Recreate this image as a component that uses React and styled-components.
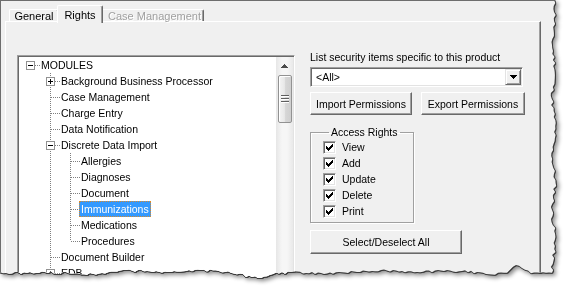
// IMPORT DEPENDENCIES
import React from "react";
import styled, { createGlobalStyle } from "styled-components";

const GlobalStyle = createGlobalStyle`
  html, body {
    margin: 0;
    padding: 0;
    background: #fff;
  }
  body {
    font-family: "Liberation Sans", Arial, sans-serif;
    font-size: 10.5px;
    color: #000;
  }
`;

// TORN PAPER EDGE (RIGHT + BOTTOM) AS A CLIP POLYGON
const W = 560;
const H = 282;
let seed = 11;
const rand = () => {
  seed = (seed * 9301 + 49297) % 233280;
  return seed / 233280;
};
const tornEdge = (() => {
  const pts = ["0px 0px"];
  for (let y = 0; y <= 270; y += 3) {
    const x = 553.5 + Math.sin(y / 9) * 1.4 + (rand() - 0.5) * 3.2;
    pts.push(`${x.toFixed(1)}px ${y}px`);
  }
  for (let x = 552; x >= 0; x -= 3) {
    const bump = -8 * Math.exp(-((x - 517) ** 2) / 60);
    const dip = 4 * Math.exp(-((x - 255) ** 2) / 200);
    const y =
      272 +
      Math.sin(x / 37) * 1.2 +
      Math.sin(x / 13 + 1) * 0.8 +
      bump +
      dip +
      (rand() - 0.5) * 2.4;
    pts.push(`${x}px ${y.toFixed(1)}px`);
  }
  return `polygon(${pts.join(", ")})`;
})();

// TREE DATA
const TREE = [
  {
    label: "MODULES",
    open: true,
    children: [
      { label: "Background Business Processor", closed: true },
      { label: "Case Management" },
      { label: "Charge Entry" },
      { label: "Data Notification" },
      {
        label: "Discrete Data Import",
        open: true,
        children: [
          { label: "Allergies" },
          { label: "Diagnoses" },
          { label: "Document" },
          { label: "Immunizations", selected: true },
          { label: "Medications" },
          { label: "Procedures" },
        ],
      },
      { label: "Document Builder" },
      { label: "EDB", closed: true },
      { label: "Encounter Forms" },
    ],
  },
];

// FLATTEN TREE INTO ROWS WITH THE GUIDE LINES EACH ROW NEEDS
const flatten = (nodes, guides = [], out = []) => {
  nodes.forEach((node, i) => {
    const last = i === nodes.length - 1;
    out.push({
      ...node,
      guides,
      first: guides.length === 0 && i === 0,
      last,
      expandable: !!node.children || !!node.closed,
    });
    if (node.open && node.children) {
      flatten(node.children, [...guides, !last], out);
    }
  });
  return out;
};

const ROWS = flatten(TREE);
const RIGHTS = ["View", "Add", "Update", "Delete", "Print"];

const Arrow = ({ up }) => (
  <svg
    width="7"
    height="4"
    viewBox="0 0 7 4"
    shapeRendering="crispEdges"
    style={up ? { transform: "rotate(180deg)" } : undefined}
  >
    <path
      d="M0 0h7v1h-1v1h-1v1h-1v1h-1v-1h-1v-1h-1v-1h-1z"
      fill={up ? "#4d4d4d" : "#000"}
    />
  </svg>
);

const Tick = () => (
  <svg width="7" height="7" viewBox="0 0 7 7" shapeRendering="crispEdges">
    <path
      d="M6 0h1v1h-1z M5 1h2v1h-2z M0 2h1v1h-1z M4 2h3v1h-3z M0 3h2v1h-2z M3 3h3v1h-3z M0 4h5v1h-5z M1 5h3v1h-3z M2 6h1v1h-1z"
      fill="#000"
    />
  </svg>
);

const Sign = ({ plus }) => (
  <svg width="7" height="7" viewBox="0 0 7 7" shapeRendering="crispEdges">
    <rect x="1" y="3" width="5" height="1" fill="#000" />
    {plus && <rect x="3" y="1" width="1" height="5" fill="#000" />}
  </svg>
);

const App = () => {
  return (
    <>
      <GlobalStyle />
      <Page>
        <Shadow>
          <Dialog>
            <TabStrip>
              <Tab $w={50}>General</Tab>
              <Tab $w={46} $active>
                Rights
              </Tab>
              <Tab $w={103} $pad={4} $disabled>
                Case Management
              </Tab>
            </TabStrip>
            <Panel>
              <TreeBox>
                <TreeList>
                  {ROWS.map((row) => (
                    <TreeRow key={row.label}>
                      {row.guides.map((on, i) => (
                        <Guide key={i} $on={on} />
                      ))}
                      <Gutter $up={!row.first} $down={!row.last}>
                        {row.expandable && (
                          <Expander>
                            <Sign plus={!row.open} />
                          </Expander>
                        )}
                      </Gutter>
                      <Label $selected={row.selected}>{row.label}</Label>
                    </TreeRow>
                  ))}
                </TreeList>
                <ScrollBar>
                  <ArrowButton>
                    <Arrow up />
                  </ArrowButton>
                  <Thumb>
                    <svg width="8" height="8" viewBox="0 0 8 8" shapeRendering="crispEdges">
                      <rect y="0" width="8" height="1" fill="#5f5f5f" />
                      <rect y="1" width="8" height="1" fill="#fff" />
                      <rect y="3" width="8" height="1" fill="#5f5f5f" />
                      <rect y="4" width="8" height="1" fill="#fff" />
                      <rect y="6" width="8" height="1" fill="#5f5f5f" />
                      <rect y="7" width="8" height="1" fill="#fff" />
                    </svg>
                  </Thumb>
                </ScrollBar>
              </TreeBox>

              <Side>
                <Caption>List security items specific to this product</Caption>
                <Combo>
                  <span>&lt;All&gt;</span>
                  <DropButton>
                    <Arrow />
                  </DropButton>
                </Combo>
                <ButtonRow>
                  <Button $w={102}>Import Permissions</Button>
                  <Button $w={104}>Export Permissions</Button>
                </ButtonRow>
                <GroupBox>
                  <legend>Access Rights</legend>
                  {RIGHTS.map((name) => (
                    <CheckRow key={name}>
                      <CheckBox>
                        <Tick />
                      </CheckBox>
                      {name}
                    </CheckRow>
                  ))}
                </GroupBox>
                <Button $w={152} $h={24} style={{ marginTop: 7 }}>
                  Select/Deselect All
                </Button>
              </Side>
            </Panel>
          </Dialog>
        </Shadow>
      </Page>
    </>
  );
};

const DOT_V = "repeating-linear-gradient(to bottom, #7f7f7f 0 1px, transparent 1px 2px)";
const DOT_H = "repeating-linear-gradient(to right, #7f7f7f 0 1px, transparent 1px 2px)";

const Page = styled.div`
  width: 566px;
  height: 286px;
  overflow: hidden;
  background: #fff;
`;

const Shadow = styled.div`
  width: ${W}px;
  height: ${H}px;
  filter: drop-shadow(1px 0 0 #3a3a3a) drop-shadow(0 1px 0 #3a3a3a)
    drop-shadow(2px 2px 2px rgba(0, 0, 0, 0.45));
`;

const Dialog = styled.div`
  box-sizing: border-box;
  width: 100%;
  height: 100%;
  overflow: hidden;
  clip-path: ${tornEdge};
  background: #f0f0f0;
  border-top: 1px solid #6d6d6d;
  border-left: 1px solid #6d6d6d;
  padding: 4px 0 0 4px;
`;

const TabStrip = styled.div`
  position: relative;
  z-index: 1;
  display: flex;
  align-items: flex-end;
  height: 16px;
  padding-left: 4px;
`;

const Tab = styled.div`
  box-sizing: border-box;
  position: relative;
  z-index: ${(p) => (p.$active ? 1 : 0)};
  width: ${(p) => p.$w}px;
  height: ${(p) => (p.$active ? 18 : 12)}px;
  margin: 0 ${(p) => (p.$active ? -2 : 0)}px ${(p) => (p.$active ? -2 : 0)}px;
  padding: ${(p) => (p.$active ? 3 : 0)}px 0 0 ${(p) => p.$pad || 0}px;
  font-size: 11px;
  line-height: 12px;
  text-align: center;
  white-space: nowrap;
  color: ${(p) => (p.$disabled ? "#a0a0a0" : "#000")};
  text-shadow: ${(p) => (p.$disabled ? "1px 1px 0 #fff" : "none")};
  background: #f0f0f0;
  border-top: 1px solid #fff;
  border-left: 1px solid #fff;
  border-right: 1px solid #696969;
  border-radius: 2px 2px 0 0;
  box-shadow: inset -1px 0 #a0a0a0;
`;

const Panel = styled.div`
  box-sizing: border-box;
  width: 536px;
  height: 300px;
  display: flex;
  align-items: flex-start;
  gap: 15px;
  padding: 29px 0 0 11px;
  border-top: 1px solid #fff;
  border-left: 1px solid #fff;
  border-right: 1px solid #696969;
  box-shadow: inset -1px 0 #a0a0a0;
`;

const TreeBox = styled.div`
  box-sizing: border-box;
  flex: none;
  width: 278px;
  height: 240px;
  margin-top: 4px;
  padding: 1px;
  display: flex;
  background: #fff;
  border: 1px solid;
  border-color: #a0a0a0 #fff #fff #a0a0a0;
  box-shadow: inset 1px 1px #696969, inset -1px -1px #e3e3e3;
`;

const TreeList = styled.div`
  flex: 1;
  overflow: hidden;
  padding-left: 1px;
  background: #fff;
`;

const TreeRow = styled.div`
  display: flex;
  align-items: center;
  height: 16px;
  white-space: nowrap;
`;

const Guide = styled.div`
  flex: none;
  width: 20px;
  height: 16px;
  background: ${(p) => (p.$on ? DOT_V : "none")};
  background-size: 1px 16px;
  background-position: 10px 0;
  background-repeat: no-repeat;
`;

const Gutter = styled.div`
  box-sizing: border-box;
  flex: none;
  width: 20px;
  height: 16px;
  display: flex;
  align-items: center;
  padding-left: 6px;
  background-image: ${(p) =>
    [p.$up && DOT_V, p.$down && DOT_V, DOT_H].filter(Boolean).join(", ")};
  background-size: ${(p) =>
    [p.$up && "1px 8px", p.$down && "1px 8px", "9px 1px"].filter(Boolean).join(", ")};
  background-position: ${(p) =>
    [p.$up && "10px 0", p.$down && "10px 8px", "11px 8px"].filter(Boolean).join(", ")};
  background-repeat: no-repeat;
`;

const Expander = styled.span`
  box-sizing: border-box;
  width: 9px;
  height: 9px;
  display: flex;
  border: 1px solid #919191;
  background: #fff;
`;

const Label = styled.span`
  margin-left: -1px;
  padding: 0 2px;
  line-height: 16px;
  color: ${(p) => (p.$selected ? "#fff" : "#000")};
  background: ${(p) => (p.$selected ? "#3399ff" : "transparent")};
  outline: ${(p) => (p.$selected ? "1px dotted #d98a2b" : "none")};
  outline-offset: -1px;
`;

const ScrollBar = styled.div`
  flex: none;
  width: 17px;
  display: flex;
  flex-direction: column;
  background: linear-gradient(to right, #e6e6e6, #f6f6f6 35%, #f6f6f6 65%, #e9e9e9);
`;

const ArrowButton = styled.div`
  height: 17px;
  display: flex;
  align-items: center;
  justify-content: center;
`;

const Thumb = styled.div`
  box-sizing: border-box;
  height: 48px;
  margin: 1px 1px 0 2px;
  display: flex;
  align-items: center;
  justify-content: center;
  border: 1px solid #929292;
  border-radius: 2px;
  background: linear-gradient(to right, #f4f4f4, #e8e8e8 45%, #d6d6d6 55%, #cfcfcf);
  box-shadow: inset 1px 1px #fff;
`;

const Side = styled.div`
  display: flex;
  flex-direction: column;
  align-items: flex-start;
  width: 215px;
`;

const Caption = styled.div`
  height: 13px;
  line-height: 13px;
  white-space: nowrap;
`;

const Combo = styled.div`
  box-sizing: border-box;
  width: 213px;
  height: 20px;
  margin-top: 3px;
  padding: 1px 1px 1px 5px;
  display: flex;
  align-items: center;
  justify-content: space-between;
  background: #fff;
  border: 1px solid;
  border-color: #a0a0a0 #fff #fff #a0a0a0;
  box-shadow: inset 1px 1px #696969, inset -1px -1px #e3e3e3;
`;

const DropButton = styled.div`
  box-sizing: border-box;
  width: 16px;
  height: 16px;
  display: flex;
  align-items: center;
  justify-content: center;
  background: #f0f0f0;
  border: 1px solid;
  border-color: #e3e3e3 #696969 #696969 #e3e3e3;
  box-shadow: inset 1px 1px #fff, inset -1px -1px #a0a0a0;
`;

const ButtonRow = styled.div`
  display: flex;
  gap: 9px;
  margin-top: 5px;
`;

const Button = styled.div`
  box-sizing: border-box;
  width: ${(p) => p.$w}px;
  height: ${(p) => p.$h || 23}px;
  display: flex;
  align-items: center;
  justify-content: center;
  white-space: nowrap;
  background: #f0f0f0;
  border: 1px solid;
  border-color: #fff #696969 #696969 #fff;
  box-shadow: inset -1px -1px #a0a0a0;
`;

const GroupBox = styled.fieldset`
  box-sizing: border-box;
  width: 104px;
  margin: 11px 0 0;
  padding: 0 0 3px 12px;
  border: 1px solid #a0a0a0;
  box-shadow: inset 1px 1px #fff, 1px 1px #fff;

  legend {
    margin-left: 6px;
    padding: 0 2px;
    line-height: 13px;
  }
`;

const CheckRow = styled.div`
  display: flex;
  align-items: center;
  gap: 6px;
  height: 16px;
`;

const CheckBox = styled.span`
  box-sizing: border-box;
  flex: none;
  width: 13px;
  height: 13px;
  display: flex;
  align-items: center;
  justify-content: center;
  background: #fff;
  border: 1px solid;
  border-color: #a0a0a0 #fff #fff #a0a0a0;
  box-shadow: inset 1px 1px #696969, inset -1px -1px #e3e3e3;
`;

export default App;
